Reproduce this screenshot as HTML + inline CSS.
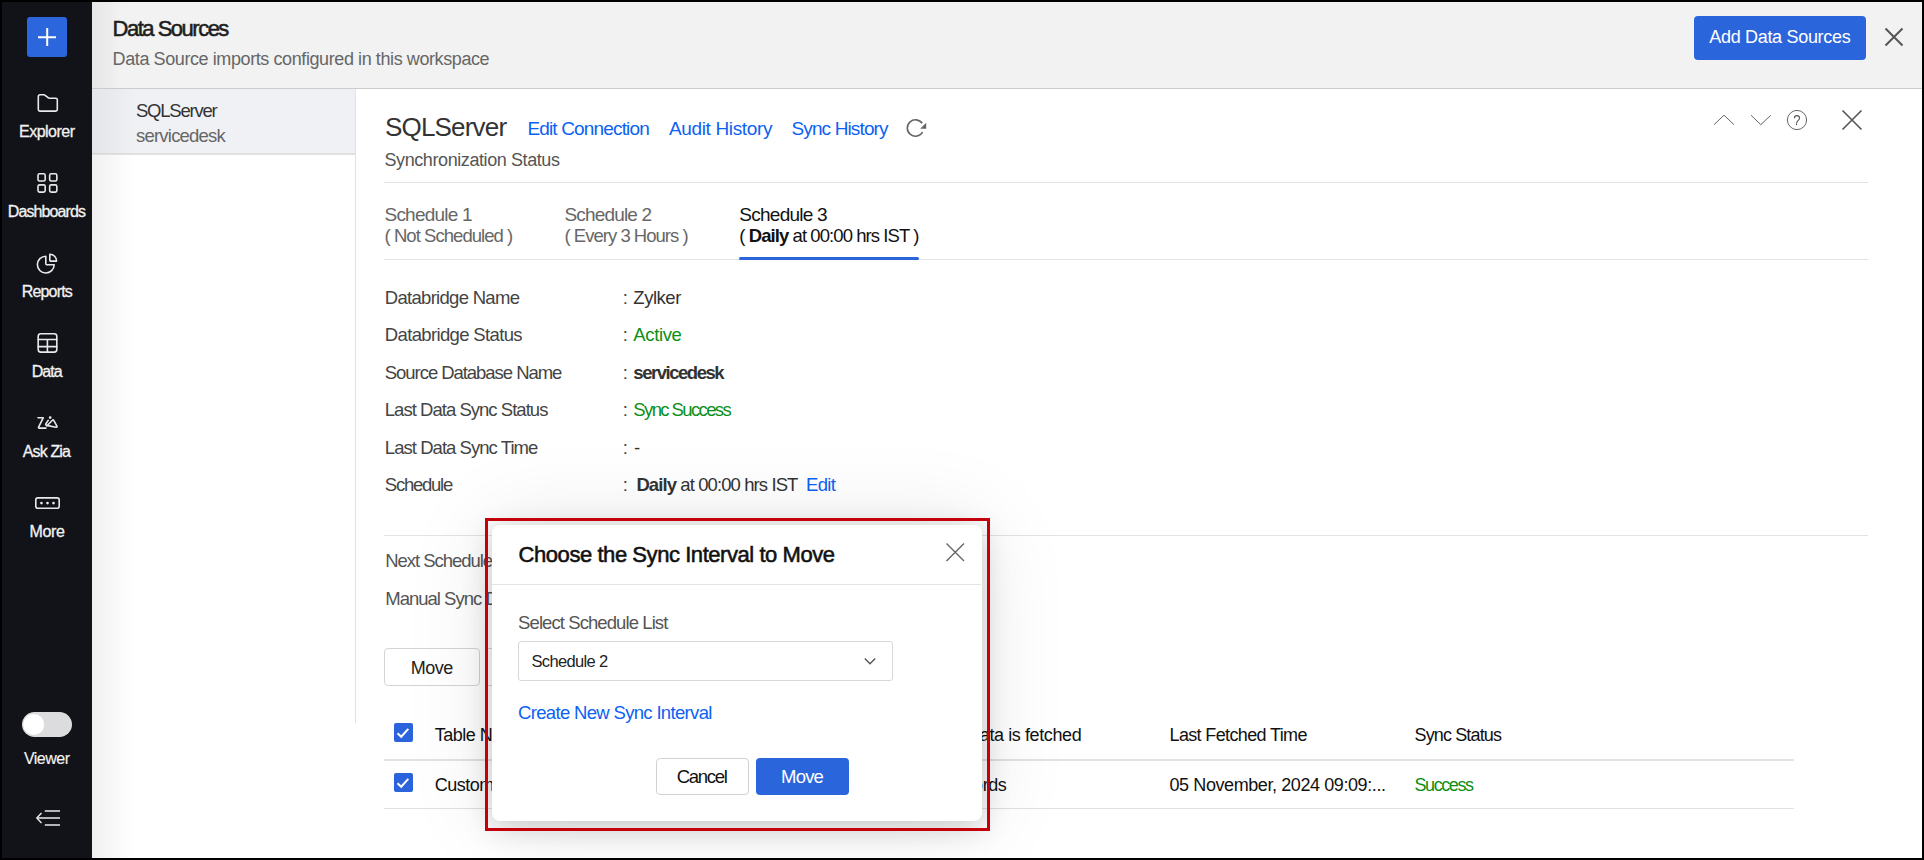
<!DOCTYPE html>
<html><head><meta charset="utf-8">
<style>
html,body{margin:0;padding:0;}
body{width:1924px;height:860px;position:relative;overflow:hidden;background:#000;font-family:"Liberation Sans",sans-serif;}
.t{position:absolute;white-space:nowrap;}
.abs{position:absolute;}
svg{position:absolute;left:0;top:0;overflow:visible;}
</style></head><body>
<!-- frame content -->
<div class="abs" style="left:2px;top:2px;width:1920px;height:856px;background:#fff;overflow:hidden;">
</div>
<!-- sidebar -->
<div class="abs" style="left:2px;top:2px;width:90px;height:856px;background:#111318;"></div>
<!-- left shadow gradient -->
<div class="abs" style="left:92px;top:88px;width:42px;height:770px;background:linear-gradient(to right,rgba(0,0,0,0.06),rgba(0,0,0,0));"></div>
<!-- header -->
<div class="abs" style="left:92px;top:2px;width:1830px;height:86px;background:#f2f2f2;border-bottom:1px solid #cbcbcb;"></div>
<div class="abs" style="left:92px;top:2px;width:30px;height:86px;background:linear-gradient(to right,rgba(0,0,0,0.05),rgba(0,0,0,0));"></div>
<!-- list selected -->
<div class="abs" style="left:92px;top:89px;width:263px;height:64px;background:#f0f1f5;border-bottom:2px solid #e0e0e0;"></div>
<div class="abs" style="left:92px;top:89px;width:45px;height:65px;background:linear-gradient(to right,rgba(0,0,0,0.05),rgba(0,0,0,0));"></div>
<!-- vertical divider -->
<div class="abs" style="left:355px;top:89px;width:1px;height:634px;background:#e2e2e2;"></div>
<!-- add data sources button -->
<div class="abs" style="left:1694px;top:16px;width:172px;height:44px;background:#2b65dc;border-radius:4px;"></div>
<!-- horizontal rules main -->
<div class="abs" style="left:384px;top:182px;width:1484px;height:1px;background:#e3e3e3;"></div>
<div class="abs" style="left:384px;top:259px;width:1484px;height:1px;background:#e3e3e3;"></div>
<div class="abs" style="left:739px;top:257px;width:180px;height:3px;background:#2b65dc;border-radius:2px;"></div>
<div class="abs" style="left:384px;top:535px;width:1484px;height:1px;background:#e3e3e3;"></div>
<!-- move btn bg -->
<div class="abs" style="left:384px;top:648px;width:94px;height:36px;border:1px solid #d4d4d4;border-radius:4px;background:#fff;"></div>
<div class="abs" style="left:485px;top:648px;width:120px;height:36px;border:1px solid #d4d4d4;border-radius:0 4px 4px 0;background:#fff;"></div>
<!-- table -->
<div class="abs" style="left:384px;top:759px;width:1410px;height:2px;background:#e2e2e2;"></div>
<div class="abs" style="left:384px;top:808px;width:1410px;height:1px;background:#e0e0e0;"></div>
<div class="abs" style="left:394px;top:723px;width:19px;height:19px;background:#2b63dc;border-radius:2px;"></div>
<div class="abs" style="left:394px;top:773px;width:19px;height:19px;background:#2b63dc;border-radius:2px;"></div>

<div class="t" style="left:19.00px;top:124.00px;font-size:16px;line-height:16px;letter-spacing:-0.503px;color:#f2f2f2;-webkit-text-stroke:0.3px #f2f2f2;">Explorer</div>
<div class="t" style="left:7.80px;top:204.00px;font-size:16px;line-height:16px;letter-spacing:-0.893px;color:#f2f2f2;-webkit-text-stroke:0.3px #f2f2f2;">Dashboards</div>
<div class="t" style="left:21.70px;top:284.00px;font-size:16px;line-height:16px;letter-spacing:-0.817px;color:#f2f2f2;-webkit-text-stroke:0.3px #f2f2f2;">Reports</div>
<div class="t" style="left:31.80px;top:364.00px;font-size:16px;line-height:16px;letter-spacing:-1.007px;color:#f2f2f2;-webkit-text-stroke:0.3px #f2f2f2;">Data</div>
<div class="t" style="left:22.80px;top:444.00px;font-size:16px;line-height:16px;letter-spacing:-0.873px;color:#f2f2f2;-webkit-text-stroke:0.3px #f2f2f2;">Ask Zia</div>
<div class="t" style="left:29.60px;top:524.00px;font-size:16px;line-height:16px;letter-spacing:-0.360px;color:#f2f2f2;-webkit-text-stroke:0.3px #f2f2f2;">More</div>
<div class="t" style="left:23.90px;top:751.00px;font-size:16px;line-height:16px;letter-spacing:-0.508px;color:#f2f2f2;-webkit-text-stroke:0.15px #f2f2f2;">Viewer</div>
<div class="t" style="left:112.60px;top:18.00px;font-size:22px;line-height:22px;letter-spacing:-1.502px;color:#1e1e1e;-webkit-text-stroke:0.55px #1e1e1e;">Data Sources</div>
<div class="t" style="left:112.60px;top:50.00px;font-size:18px;line-height:18px;letter-spacing:-0.408px;color:#666;">Data Source imports configured in this workspace</div>
<div class="t" style="left:1709.30px;top:28.00px;font-size:18px;line-height:18px;letter-spacing:-0.317px;color:#fff;">Add Data Sources</div>
<div class="t" style="left:136.00px;top:102.00px;font-size:18.5px;line-height:18.5px;letter-spacing:-1.234px;color:#333;">SQLServer</div>
<div class="t" style="left:136.00px;top:127.00px;font-size:18.5px;line-height:18.5px;letter-spacing:-0.786px;color:#666;">servicedesk</div>
<div class="t" style="left:385.00px;top:114.00px;font-size:26px;line-height:26px;letter-spacing:-0.812px;color:#333;">SQLServer</div>
<div class="t" style="left:527.40px;top:119.00px;font-size:19px;line-height:19px;letter-spacing:-0.839px;color:#0b62f2;">Edit Connection</div>
<div class="t" style="left:669.00px;top:119.00px;font-size:19px;line-height:19px;letter-spacing:-0.353px;color:#0b62f2;">Audit History</div>
<div class="t" style="left:791.50px;top:119.00px;font-size:19px;line-height:19px;letter-spacing:-0.872px;color:#0b62f2;">Sync History</div>
<div class="t" style="left:384.50px;top:151.00px;font-size:18px;line-height:18px;letter-spacing:-0.411px;color:#555;">Synchronization Status</div>
<div class="t" style="left:384.50px;top:205.00px;font-size:19px;line-height:19px;letter-spacing:-0.778px;color:#666;">Schedule 1</div>
<div class="t" style="left:384.50px;top:227.00px;font-size:18.5px;line-height:18.5px;letter-spacing:-0.952px;color:#666;">( Not Scheduled )</div>
<div class="t" style="left:564.50px;top:205.00px;font-size:19px;line-height:19px;letter-spacing:-0.844px;color:#666;">Schedule 2</div>
<div class="t" style="left:564.50px;top:227.00px;font-size:18.5px;line-height:18.5px;letter-spacing:-0.979px;color:#666;">( Every 3 Hours )</div>
<div class="t" style="left:739.30px;top:205.00px;font-size:19px;line-height:19px;letter-spacing:-0.744px;color:#111;">Schedule 3</div>
<div class="t" style="left:739.30px;top:227.00px;font-size:18.5px;line-height:18.5px;letter-spacing:-0.926px;color:#111;">( <b>Daily</b> at 00:00 hrs IST )</div>
<div class="t" style="left:384.80px;top:289.00px;font-size:18.5px;line-height:18.5px;letter-spacing:-0.703px;color:#444;">Databridge Name</div>
<div class="t" style="left:622.80px;top:289.00px;font-size:18.5px;line-height:18.5px;letter-spacing:-2.480px;color:#444;">:</div>
<div class="t" style="left:384.80px;top:326.00px;font-size:18.5px;line-height:18.5px;letter-spacing:-0.644px;color:#444;">Databridge Status</div>
<div class="t" style="left:622.80px;top:326.00px;font-size:18.5px;line-height:18.5px;letter-spacing:-2.480px;color:#444;">:</div>
<div class="t" style="left:384.80px;top:364.00px;font-size:18.5px;line-height:18.5px;letter-spacing:-1.047px;color:#444;">Source Database Name</div>
<div class="t" style="left:622.80px;top:364.00px;font-size:18.5px;line-height:18.5px;letter-spacing:-2.480px;color:#444;">:</div>
<div class="t" style="left:384.80px;top:401.00px;font-size:18.5px;line-height:18.5px;letter-spacing:-0.973px;color:#444;">Last Data Sync Status</div>
<div class="t" style="left:622.80px;top:401.00px;font-size:18.5px;line-height:18.5px;letter-spacing:-2.480px;color:#444;">:</div>
<div class="t" style="left:384.80px;top:439.00px;font-size:18.5px;line-height:18.5px;letter-spacing:-0.953px;color:#444;">Last Data Sync Time</div>
<div class="t" style="left:622.80px;top:439.00px;font-size:18.5px;line-height:18.5px;letter-spacing:-2.480px;color:#444;">:</div>
<div class="t" style="left:384.80px;top:476.00px;font-size:18.5px;line-height:18.5px;letter-spacing:-1.249px;color:#444;">Schedule</div>
<div class="t" style="left:622.80px;top:476.00px;font-size:18.5px;line-height:18.5px;letter-spacing:-2.480px;color:#444;">:</div>
<div class="t" style="left:633.30px;top:289.00px;font-size:18.5px;line-height:18.5px;letter-spacing:-0.464px;color:#333;">Zylker</div>
<div class="t" style="left:633.30px;top:326.00px;font-size:18.5px;line-height:18.5px;letter-spacing:-0.364px;color:#0b8f16;">Active</div>
<div class="t" style="left:633.30px;top:364.00px;font-size:18.5px;line-height:18.5px;letter-spacing:-1.460px;color:#333;"><b>servicedesk</b></div>
<div class="t" style="left:633.30px;top:401.00px;font-size:18.5px;line-height:18.5px;letter-spacing:-1.616px;color:#0b8f16;">Sync Success</div>
<div class="t" style="left:634.00px;top:439.00px;font-size:18.5px;line-height:18.5px;letter-spacing:0.000px;color:#333;">-</div>
<div class="t" style="left:636.40px;top:476.00px;font-size:18.5px;line-height:18.5px;letter-spacing:-0.906px;color:#333;"><b>Daily</b> at 00:00 hrs IST</div>
<div class="t" style="left:806.00px;top:476.00px;font-size:18.5px;line-height:18.5px;letter-spacing:-0.668px;color:#0b62f2;">Edit</div>
<div class="t" style="left:385.30px;top:552.00px;font-size:18.5px;line-height:18.5px;letter-spacing:-1.050px;color:#555;">Next Schedule Time</div>
<div class="t" style="left:385.30px;top:590.00px;font-size:18.5px;line-height:18.5px;letter-spacing:-1.000px;color:#555;">Manual Sync Duration</div>
<div class="t" style="left:410.80px;top:659.00px;font-size:18px;line-height:18px;letter-spacing:-0.533px;color:#222;">Move</div>
<div class="t" style="left:434.70px;top:726.00px;font-size:18px;line-height:18px;letter-spacing:-0.500px;color:#111;">Table Name</div>
<div class="t" style="left:434.70px;top:776.00px;font-size:18px;line-height:18px;letter-spacing:-0.500px;color:#111;">Customers</div>
<div class="t" style="left:930.76px;top:726.00px;font-size:18px;line-height:18px;letter-spacing:-0.400px;color:#111;">How data is fetched</div>
<div class="t" style="left:942.24px;top:776.00px;font-size:18px;line-height:18px;letter-spacing:-0.400px;color:#111;">Records</div>
<div class="t" style="left:1169.50px;top:726.00px;font-size:18px;line-height:18px;letter-spacing:-0.634px;color:#111;">Last Fetched Time</div>
<div class="t" style="left:1414.50px;top:726.00px;font-size:18px;line-height:18px;letter-spacing:-0.862px;color:#111;">Sync Status</div>
<div class="t" style="left:1169.50px;top:776.00px;font-size:18px;line-height:18px;letter-spacing:-0.410px;color:#111;">05 November, 2024 09:09:...</div>
<div class="t" style="left:1414.50px;top:776.00px;font-size:18px;line-height:18px;letter-spacing:-1.423px;color:#0b8f16;">Success</div>


<svg width="1924" height="860" viewBox="0 0 1924 860" fill="none">
 <!-- plus btn -->
 <rect x="27" y="17" width="40" height="40" rx="3" fill="#2c66dc"/>
 <path d="M38 37.3H56M47.2 28V46" stroke="#fff" stroke-width="2"/>
 <g stroke="#e9e9e9" stroke-width="1.6" stroke-linejoin="round" stroke-linecap="round">
  <!-- folder -->
  <path d="M38.3 96.8q0-2 2-2h3.4q0.8 0 1.4 0.5l3 2.4q0.6 0.5 1.4 0.5h6.2q1.6 0 1.6 1.6v9.7q0 1.6-1.6 1.6h-15.8q-1.6 0-1.6-1.6z"/>
  <!-- dashboards -->
  <rect x="38" y="173.8" width="7.2" height="7.2" rx="1.6"/>
  <rect x="49.65" y="173.8" width="7.2" height="7.2" rx="1.6"/>
  <rect x="38" y="184.9" width="7.2" height="7.2" rx="1.6"/>
  <rect x="49.65" y="184.9" width="7.2" height="7.2" rx="1.6"/>
  <!-- reports -->
  <path d="M45.8 256.2A8.4 8.4 0 1 0 54.2 264.8H46.8q-1 0-1-1z"/>
  <path d="M49.8 254.3v6q0 0.8 0.8 0.8h6A6.8 6.8 0 0 0 49.8 254.3z"/>
  <!-- data -->
  <rect x="38.2" y="333.7" width="18.6" height="18.4" rx="2.6"/>
  <path d="M38.2 339.5H56.8M38.2 346.6H56.8M47.4 339.5V352"/>
  <!-- zia -->
  <path d="M38 417.8H43.2L38.6 427.2q-0.4 0.9 0.6 0.9H46"/>
  <path d="M48.2 420.4L45.8 424q-0.6 1.2 0.8 1.4L56 427.2q1.4 0.2 0.9-1.1L53.6 420.2q-0.5-0.8-1.2 0L46.8 426"/>
  <circle cx="50.2" cy="417.6" r="0.6" fill="#e9e9e9"/>
  <!-- more -->
  <rect x="35.8" y="497.9" width="23.4" height="10.4" rx="2"/>
 </g>
 <g fill="#eee"><circle cx="41.45" cy="503.1" r="1.3"/><circle cx="47.5" cy="503.1" r="1.3"/><circle cx="53.5" cy="503.1" r="1.3"/></g>
 <!-- toggle -->
 <rect x="22" y="712" width="50" height="25" rx="12.5" fill="#dcdcde"/>
 <circle cx="33.7" cy="724.5" r="10.5" fill="#fff"/>
 <!-- collapse -->
 <g stroke="#eaeaea" stroke-width="1.4">
  <path d="M44.8 811H60M37 818H60M44.8 825H60"/>
  <path d="M41.5 813L36.8 818L41.5 823" stroke-linejoin="miter"/>
 </g>
 <!-- header X -->
 <path d="M1885.5 28.5L1902.5 45.5M1902.5 28.5L1885.5 45.5" stroke="#555" stroke-width="2"/>
 <!-- refresh -->
 <path d="M922.6 132.1A8.2 8.2 0 1 1 922.2 123.3" stroke="#666" stroke-width="1.6"/>
 <path d="M926.2 122.8V128.8H920.2Z" fill="#666"/>
 <!-- top right icons -->
 <g stroke="#666" stroke-width="1">
  <path d="M1714 124.7L1724 115.2L1734 124.7"/>
  <path d="M1751 115.2L1760.8 124.7L1770.8 115.2"/>
  <circle cx="1797" cy="120" r="9.6"/>
 </g>
 <path d="M1842.5 110.5L1861.5 129.5M1861.5 110.5L1842.5 129.5" stroke="#555" stroke-width="1.6"/>
 <path d="M1794.4 118.3q0-2.7 2.6-2.7q2.5 0 2.5 2.4q0 1.4-1.5 2.7q-1.3 1.1-1.5 3" stroke="#555" stroke-width="1.1"/><circle cx="1796.5" cy="124.5" r="0.7" fill="#555"/>
 <!-- checks -->
 <path d="M397.5 733.2L401.2 736.7L408.3 728.8" stroke="#fff" stroke-width="2"/>
 <path d="M397.5 783.2L401.2 786.7L408.3 778.8" stroke="#fff" stroke-width="2"/>
</svg>

<!-- modal shadow & modal -->
<div class="abs" style="left:492px;top:525px;width:490px;height:296px;background:#fff;border-radius:8px;box-shadow:0 6px 30px rgba(0,0,0,0.18),0 0 90px rgba(0,0,0,0.10);"></div>
<div class="abs" style="left:492px;top:583.5px;width:489px;height:1.5px;background:#e4e4e4;"></div>
<div class="abs" style="left:518px;top:641px;width:373px;height:38px;border:1px solid #d8d8d8;border-radius:3px;background:#fff;"></div>
<div class="abs" style="left:656px;top:758px;width:91px;height:35px;border:1px solid #d2d2d2;border-radius:4px;background:#fff;"></div>
<div class="abs" style="left:756px;top:758px;width:93px;height:37px;border-radius:4px;background:#2b65dc;"></div>
<div class="t" style="left:518.60px;top:544.00px;font-size:22px;line-height:22px;letter-spacing:-0.443px;color:#111;-webkit-text-stroke:0.55px #111;">Choose the Sync Interval to Move</div>
<div class="t" style="left:518.10px;top:614.00px;font-size:18.5px;line-height:18.5px;letter-spacing:-0.916px;color:#555;">Select Schedule List</div>
<div class="t" style="left:531.50px;top:653.00px;font-size:16.5px;line-height:16.5px;letter-spacing:-0.644px;color:#222;">Schedule 2</div>
<div class="t" style="left:518.00px;top:704.00px;font-size:18.5px;line-height:18.5px;letter-spacing:-0.669px;color:#0b62f2;">Create New Sync Interval</div>
<div class="t" style="left:676.80px;top:768.00px;font-size:18.5px;line-height:18.5px;letter-spacing:-1.287px;color:#111;">Cancel</div>
<div class="t" style="left:781.00px;top:768.00px;font-size:18.5px;line-height:18.5px;letter-spacing:-0.775px;color:#fff;">Move</div>

<svg width="1924" height="860" viewBox="0 0 1924 860" fill="none">
 <path d="M946.5 543.5L964 561M964 543.5L946.5 561" stroke="#666" stroke-width="1.4"/>
 <path d="M864.8 658.5L870 663.8L875.2 658.5" stroke="#555" stroke-width="1.4"/>
</svg>
<!-- red rect -->
<div class="abs" style="left:485px;top:517.5px;width:499px;height:307px;border:3px solid #c4000b;"></div>
<!-- frame borders over everything -->
<div class="abs" style="left:0;top:0;width:1924px;height:2px;background:#000;"></div>
<div class="abs" style="left:0;top:858px;width:1924px;height:2px;background:#000;"></div>
<div class="abs" style="left:0;top:0;width:2px;height:860px;background:#000;"></div>
<div class="abs" style="left:1922px;top:0;width:2px;height:860px;background:#000;"></div>
</body></html>
